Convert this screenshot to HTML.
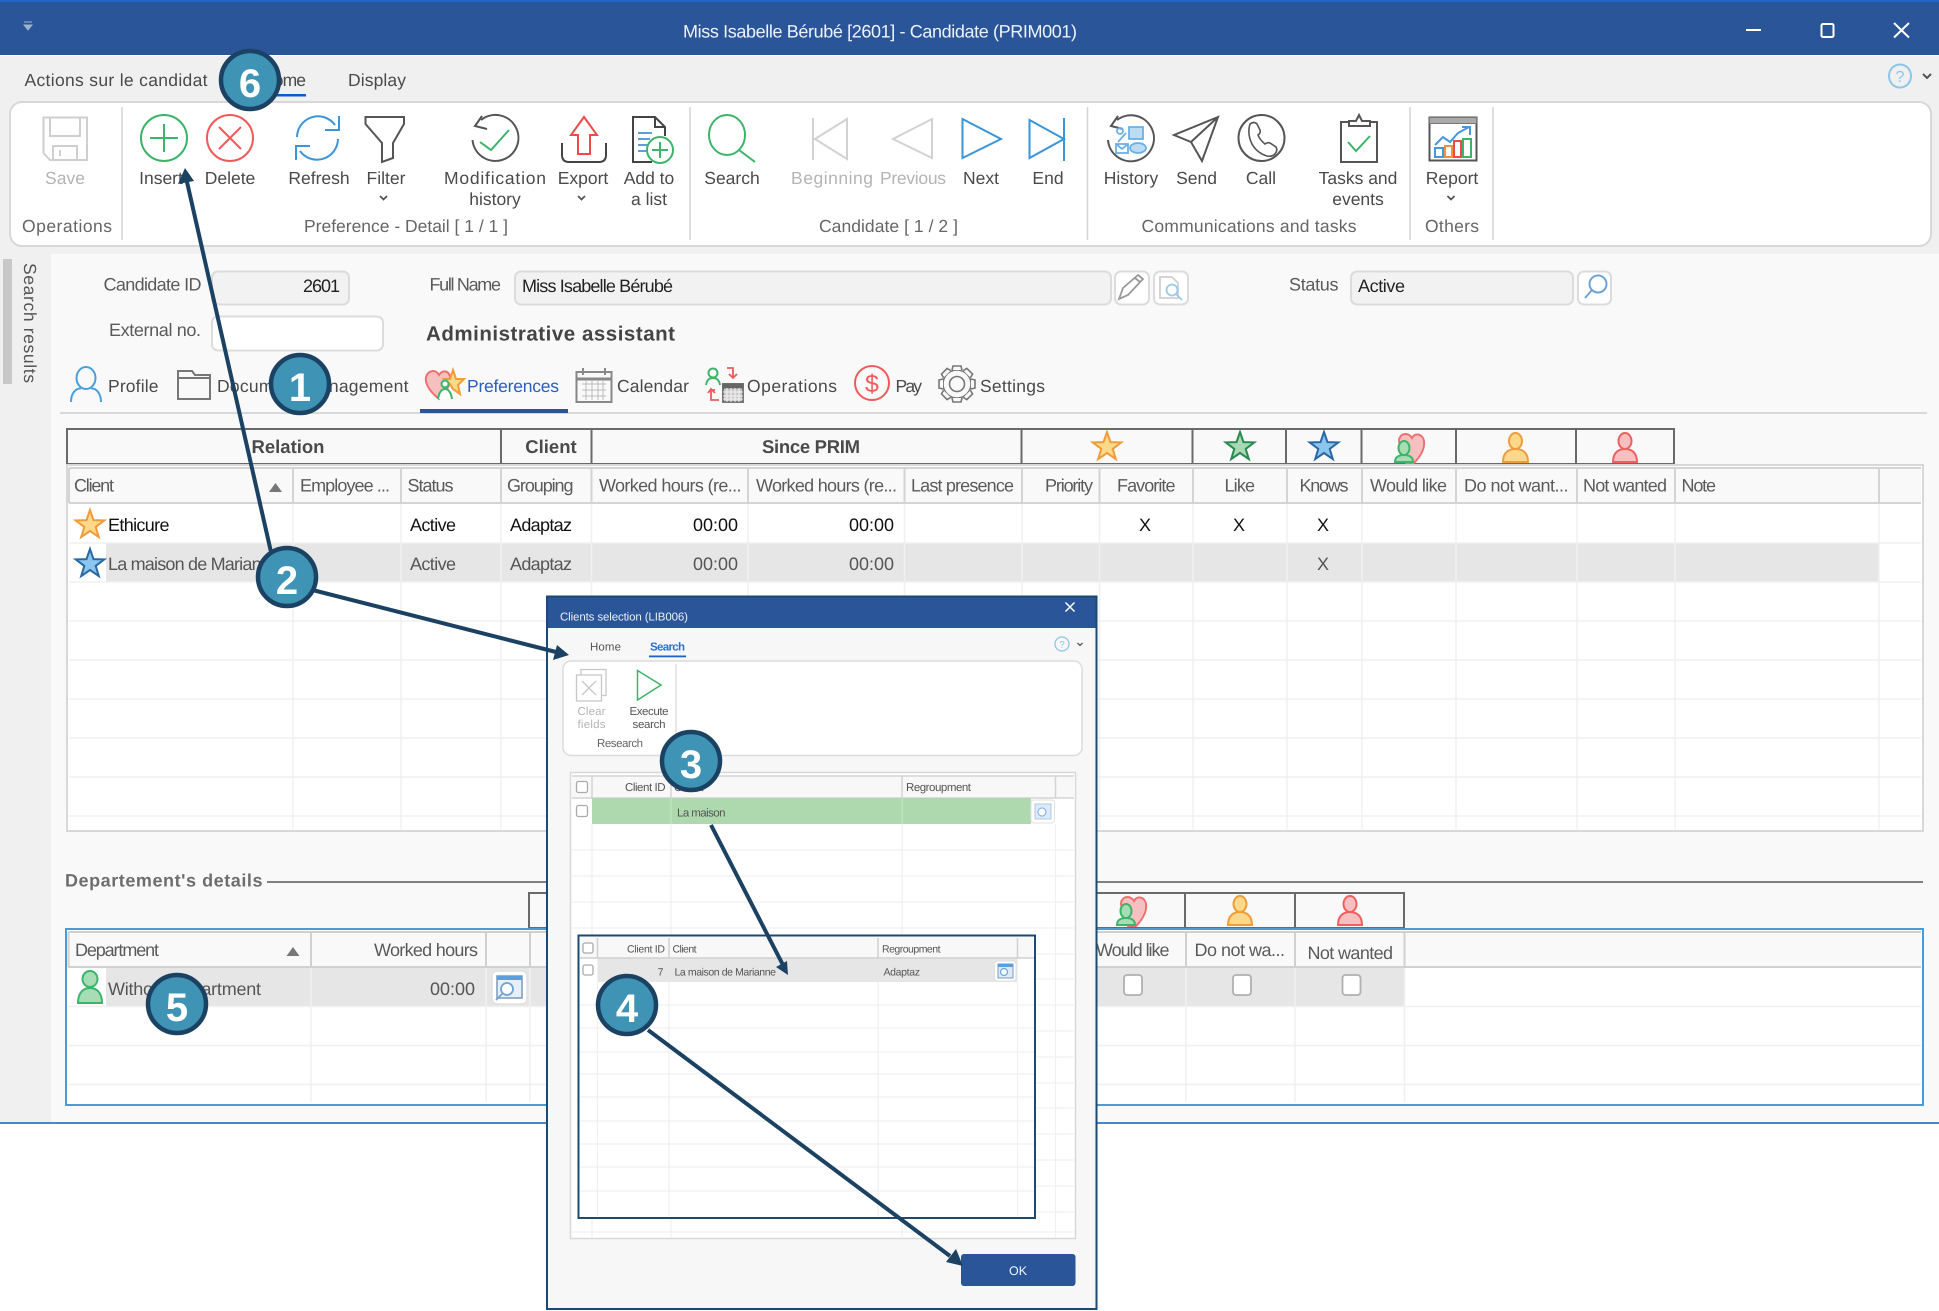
<!DOCTYPE html>
<html lang="en"><head><meta charset="utf-8"><title>Candidate</title>
<style>
html,body{margin:0;padding:0;background:#fff}
svg{display:block;filter:blur(.3px)}
text{font-family:"Liberation Sans",sans-serif;text-rendering:geometricPrecision;white-space:pre}
.r{font-size:17.5px;fill:#4a4a4a;text-anchor:middle}
.d{fill:#b4b4b4}
.g{font-size:17.5px;fill:#666;text-anchor:middle}
.t{font-size:17.5px;fill:#4a4a4a}
.f{font-size:18px;fill:#5a5a5a}
.v{font-size:18px;fill:#222}
.h{font-size:18px;fill:#5a5a5a}
.c{font-size:18px;fill:#111}
.s{font-size:18px;fill:#555}
.b{font-size:18.5px;font-weight:bold;fill:#4a4a4a;text-anchor:middle}
.m{font-size:11.5px;fill:#555}
.n{font-family:"Liberation Sans",sans-serif;font-size:40px;font-weight:bold;fill:#fff;text-anchor:middle}
</style></head><body>
<svg xmlns="http://www.w3.org/2000/svg" width="1939" height="1311" viewBox="0 0 1939 1311">
<rect width="1939" height="1311" fill="#fff"/>
<!-- window -->
<rect x="0" y="56" width="1939" height="1066" fill="#f0f0f0"/>
<rect x="0" y="0" width="1939" height="55" fill="#2a5599"/>
<rect x="0" y="0" width="1939" height="2" fill="#1f66c8"/>
<rect x="0" y="1122" width="1939" height="2" fill="#4a86c8"/>
<path d="M24 22h8M24 25h8l-4 5z" fill="#9fb3cf" stroke="#9fb3cf"/>
<text x="683" y="37.5" font-size="18" fill="#eef3fa" textLength="394">Miss Isabelle Bérubé [2601] - Candidate (PRIM001)</text>
<path d="M1746 30h15" stroke="#fff" stroke-width="2"/>
<rect x="1821.5" y="24" width="12" height="13" rx="1.5" fill="none" stroke="#fff" stroke-width="2"/>
<path d="M1894 23l15 14.500M1909 23l-15 14.500" stroke="#fff" stroke-width="2"/>
<!-- tabs -->
<text class="t" x="24.5" y="86" textLength="183">Actions sur le candidat</text>
<text class="t" x="262" y="86" textLength="44">Home</text>
<rect x="262" y="94" width="44" height="2.5" fill="#0a5ad1"/>
<text class="t" x="348" y="86" textLength="58">Display</text>
<ellipse cx="1900" cy="76" rx="11" ry="11.5" fill="none" stroke="#8cc6ea" stroke-width="2"/>
<text x="1900" y="82" font-size="16" fill="#8cc6ea" text-anchor="middle">?</text>
<path d="M1923 74l4 4 4-4" fill="none" stroke="#555" stroke-width="2"/>
<!-- ribbon -->
<rect x="10" y="102" width="1921" height="144" rx="12" fill="#fff" stroke="#d8d8d8" stroke-width="2"/>
<path d="M122 107V240M690 107V240M1087.5 107V240M1410 107V240M1493 107V240" stroke="#d4d4d4" stroke-width="1.5"/>
<!-- ribbon icons -->
<g fill="none" stroke-width="2">
<g stroke="#cfcfcf"><path d="M43.5 117.5H87V160H50L43.5 153Z"/><path d="M50 117.5V136H80V117.5M53 160V146H77V160M60 150V156"/></g>
<g stroke="#3cb46a"><circle cx="164" cy="138" r="23"/><path d="M164 124V152M150 138H178"/></g>
<g stroke="#ef5b5b"><circle cx="230" cy="138" r="23"/><path d="M219 127L241 149M241 127L219 149"/></g>
<g stroke="#3a96d8"><path d="M297 137A21 21 0 0 1 335 125"/><path d="M339 116V130H325"/><path d="M338 139A21 21 0 0 1 300 151"/><path d="M296 160V146H310"/></g>
<path d="M365.5 117H404V124L393 143V158L382 162V143L365.5 124Z" stroke="#555"/>
<g stroke="#555"><path d="M481 120A23 23 0 1 1 472.5 140"/><path d="M482 116L475 126L487 129"/></g>
<path d="M480 142L491 150L509 130" stroke="#3cb46a"/>
<path d="M584 117L597 135H590V154H578V135H571Z" stroke="#ef4a4a"/>
<path d="M562 143V155Q562 162 569 162H599Q606 162 606 155V143" stroke="#444"/>
<path d="M652 162H633V117H655L665 127V136M655 117V127H665" stroke="#444"/>
<path d="M638 133h14M638 139h12M638 145h10M638 151h10" stroke="#5aa0dc"/>
<circle cx="660" cy="150" r="13" fill="#fff" stroke="#3cb46a"/>
<path d="M660 142V158M652 150H668" stroke="#3cb46a"/>
<g stroke="#3cb46a"><ellipse cx="727" cy="135" rx="18" ry="20"/><path d="M739 150L755 162"/></g>
<g stroke="#d2d2d2"><path d="M813 118V160"/><path d="M847 119L815 139L847 159Z"/><path d="M932 119L893 139L932 158Z"/></g>
<g stroke="#3a96d8"><path d="M962.5 119L1001 139L962.5 158Z"/><path d="M1029.5 120L1064 139L1029.5 158Z"/><path d="M1064 118V161"/></g>
<g stroke="#555"><path d="M1117 120A23 23 0 1 1 1108 140"/><path d="M1118 116L1111 126L1123 129"/></g>
<g stroke="#6cb0e4" stroke-width="1.8"><rect x="1129" y="127" width="14" height="12" fill="#bcdcf4"/><circle cx="1120" cy="131" r="3"/><path d="M1118 142L1126 133"/><rect x="1116" y="144" width="12" height="9"/><path d="M1116 144l6 5 6-5"/><ellipse cx="1138" cy="148" rx="8" ry="5" fill="#bcdcf4"/></g>
<path d="M1218 117L1174 135L1191 142L1202 161ZM1218 117L1191 142" stroke="#555"/>
<circle cx="1261.5" cy="138" r="23" stroke="#555"/>
<path d="M1250 125q4-3 7 0l3 6q1 3-2 5q2 5 7 9q3-2 5-1l6 4q2 3-1 7q-3 3-8 2q-10-3-15-12q-5-10-2-20z" stroke="#555" stroke-width="1.600" transform="translate(0 -1)"/>
<path d="M1349 122H1341V162H1377V122H1370M1349 126V121H1356L1359 115L1362 121H1370V126Z" stroke="#555"/>
<path d="M1348 142L1356 151L1370 136" stroke="#3cb46a"/>
<rect x="1429.5" y="117.5" width="47" height="43" stroke="#555"/>
<rect x="1429.5" y="117.5" width="47" height="6" fill="#aaa" stroke="#777" stroke-width="1"/>
<rect x="1435" y="148" width="8" height="9" stroke="#4a96d8"/><rect x="1445" y="146" width="7" height="11" stroke="#f09040"/><rect x="1454" y="141" width="7" height="16" stroke="#ef4a4a"/><rect x="1463" y="139" width="8" height="18" stroke="#3cb46a"/>
<path d="M1435 145L1443 137L1450 142L1458 133L1469 127M1462 127H1470V135" stroke="#4a96d8"/>
</g>
<!-- ribbon labels -->
<text class="r d" x="65" y="184">Save</text>
<text class="r" x="161" y="184">Insert</text>
<text class="r" x="230" y="184">Delete</text>
<text class="r" x="319" y="184">Refresh</text>
<text class="r" x="386" y="184">Filter</text>
<text class="r" x="495" y="184" textLength="102">Modification</text>
<text class="r" x="495" y="205">history</text>
<text class="r" x="583" y="184">Export</text>
<text class="r" x="649" y="184">Add to</text>
<text class="r" x="649" y="205">a list</text>
<text class="r" x="732" y="184">Search</text>
<text class="r d" x="832" y="184" textLength="82">Beginning</text>
<text class="r d" x="913" y="184" textLength="66">Previous</text>
<text class="r" x="981" y="184">Next</text>
<text class="r" x="1048" y="184">End</text>
<text class="r" x="1131" y="184">History</text>
<text class="r" x="1196.5" y="184">Send</text>
<text class="r" x="1261" y="184">Call</text>
<text class="r" x="1358" y="184">Tasks and</text>
<text class="r" x="1358" y="205">events</text>
<text class="r" x="1452" y="184">Report</text>
<g fill="none" stroke="#555" stroke-width="1.8"><path d="M380 196l3.500 3.500 3.500-3.500M578 196l3.500 3.500 3.500-3.500M1447.500 196l3.500 3.500 3.500-3.500"/></g>
<text class="g" x="67" y="232" textLength="90">Operations</text>
<text class="g" x="406" y="232" textLength="204">Preference - Detail [ 1 / 1 ]</text>
<text class="g" x="888.500" y="232" textLength="139">Candidate [ 1 / 2 ]</text>
<text class="g" x="1249" y="232" textLength="215">Communications and tasks</text>
<text class="g" x="1452" y="232" textLength="54">Others</text>
<!-- content -->
<rect x="51" y="254" width="1888" height="868" fill="#f9f9f9"/>
<rect x="3" y="259" width="9" height="125" fill="#c8c8c8"/>
<text transform="translate(24 263) rotate(90)" font-size="17.500" fill="#555" textLength="120">Search results</text>
<!-- form -->
<text class="f" x="103.500" y="290.500" textLength="98">Candidate ID</text>
<rect x="212" y="271.500" width="137" height="33" rx="6" fill="#f2f2f2" stroke="#dcdcdc" stroke-width="2"/>
<text class="v" x="340" y="292" text-anchor="end" textLength="37">2601</text>
<text class="f" x="109" y="336" textLength="92">External no.</text>
<rect x="212" y="316.500" width="171" height="34" rx="6" fill="#fff" stroke="#dcdcdc" stroke-width="2"/>
<text class="f" x="429.500" y="290.500" textLength="71.500">Full Name</text>
<rect x="515" y="271.500" width="596" height="33" rx="6" fill="#f2f2f2" stroke="#dcdcdc" stroke-width="2"/>
<text class="v" x="522" y="292" textLength="151">Miss Isabelle Bérubé</text>
<rect x="1115" y="271.500" width="34" height="33" rx="6" fill="#fff" stroke="#dcdcdc" stroke-width="2"/>
<path d="M1119 299L1123 288L1138 275L1143 279L1128 295ZM1135 278L1140 282" fill="none" stroke="#999" stroke-width="1.800"/>
<rect x="1154" y="271.500" width="34" height="33" rx="6" fill="#fff" stroke="#dcdcdc" stroke-width="2"/>
<path d="M1160 277H1172L1178 283V298H1160Z" fill="none" stroke="#d0d0d0" stroke-width="1.800"/>
<circle cx="1172" cy="290" r="5.500" fill="none" stroke="#9cc8ea" stroke-width="1.800"/><path d="M1176 294L1182 300" stroke="#9cc8ea" stroke-width="1.800"/>
<text class="f" x="1289" y="290.500" textLength="49.500">Status</text>
<rect x="1351" y="271.500" width="222" height="33" rx="6" fill="#f2f2f2" stroke="#dcdcdc" stroke-width="2"/>
<text class="v" x="1358" y="292" textLength="47">Active</text>
<rect x="1578" y="271.500" width="33" height="33" rx="6" fill="#fff" stroke="#dcdcdc" stroke-width="2"/>
<circle cx="1598" cy="284" r="8.500" fill="none" stroke="#6ea4d4" stroke-width="2"/><path d="M1592 290L1585 298" stroke="#6ea4d4" stroke-width="2"/>
<text x="426" y="340.500" font-size="20.500" font-weight="bold" fill="#444" textLength="249">Administrative assistant</text>
<!-- page tabs -->
<rect x="60" y="412" width="1867" height="2" fill="#d8d8d8"/>
<rect x="420" y="409" width="148" height="4" fill="#2a5599"/>
<g fill="none" stroke-width="2">
<g stroke="#4aa0dc"><ellipse cx="86" cy="378" rx="9.500" ry="11"/><path d="M71 402C71 393 76 388 81 388.500M101 402C101 393 96 388 91 388.500"/></g>
<path d="M178 399V371H192L195 375H210V399ZM178 378H211" stroke="#777"/>
<path d="M439 399C428 390 425 383 426 377C428 370 436 369 439 375C443 369 449 371 450 377C451 383 448 390 439 399Z" fill="#f6c0c0" stroke="#ef7070"/>
<path d="M453 370L456 379H464L458 385L460 394L453 389L450 384L444 379H450Z" fill="#fbd98a" stroke="#f09c3c"/>
<circle cx="445" cy="384" r="3.500" fill="#fff" stroke="#3cb46a"/><path d="M438 399C439 392 442 389 445 389C448 389 451 392 452 399" stroke="#3cb46a" fill="#fff"/>
<g stroke="#888"><rect x="576.500" y="372" width="35" height="30" /><path d="M576.500 379H611.500" stroke-width="3"/><path d="M583 368V375M605 368V375"/></g>
<path d="M582 384H606M582 390H606M582 396H606M586 380V400M592 380V400M598 380V400M603 380V400" stroke="#bbb" stroke-width="1"/>
<circle cx="713" cy="373" r="4.500" stroke="#3cb46a"/><path d="M706 385C707 379 710 378 713 378C716 378 719 379 720 385" stroke="#3cb46a"/>
<path d="M727 368H733V377M729 374L733 378L737 374M715 390H711V400H719M708 393L711 389L715 393" stroke="#ef5b5b" stroke-width="1.800"/>
<rect x="723" y="384" width="20" height="18" fill="#c8c8c8" stroke="#777"/><rect x="723" y="384" width="20" height="4" fill="#666" stroke="#666" stroke-width="1"/>
<path d="M727 388V402M731 388V402M735 388V402M739 388V402M723 392H743M723 396H743M723 399H743" stroke="#f4f4f4" stroke-width="1"/>
<circle cx="872" cy="383" r="17" stroke="#ef5b5b"/>
<circle cx="957" cy="384" r="14" stroke="#777" stroke-width="1.600"/><circle cx="957" cy="384" r="7.500" stroke="#777" stroke-width="1.600"/>
</g>
<text x="872" y="392" font-size="25" fill="#ef5b5b" text-anchor="middle">$</text>
<g fill="#f9f9f9" stroke="#777" stroke-width="1.600" transform="translate(957 384)">
<path d="M-5-14L-4-18H4L5-14"/><path d="M-5-14L-4-18H4L5-14" transform="rotate(45)"/><path d="M-5-14L-4-18H4L5-14" transform="rotate(90)"/><path d="M-5-14L-4-18H4L5-14" transform="rotate(135)"/><path d="M-5-14L-4-18H4L5-14" transform="rotate(180)"/><path d="M-5-14L-4-18H4L5-14" transform="rotate(225)"/><path d="M-5-14L-4-18H4L5-14" transform="rotate(270)"/><path d="M-5-14L-4-18H4L5-14" transform="rotate(315)"/></g>
<text class="t" x="108" y="392" textLength="50.500">Profile</text>
<text class="t" x="217" y="392" textLength="191.500">Document management</text>
<text class="t" x="467" y="392" textLength="92" style="fill:#2a5fbb">Preferences</text>
<text class="t" x="617" y="392" textLength="72">Calendar</text>
<text class="t" x="747" y="392" textLength="90">Operations</text>
<text class="t" x="895.500" y="392" textLength="26.500">Pay</text>
<text class="t" x="980" y="392" textLength="65">Settings</text>
<!-- main group header -->
<rect x="67" y="429" width="1607" height="35" fill="#f9f9f9" stroke="#6a6a6a" stroke-width="2"/>
<path d="M501 429V464M591.500 429V464M1021.500 429V464M1192.500 429V464M1286 429V464M1361.500 429V464M1456 429V464M1576 429V464" stroke="#6a6a6a" stroke-width="2"/>
<text class="b" x="288" y="453">Relation</text>
<text class="b" x="551" y="453">Client</text>
<text class="b" x="811" y="453" textLength="98">Since PRIM</text>
<polygon transform="translate(1107 447)" points="0,-15 3.500,-4.900 14.300,-4.600 5.700,1.900 8.800,12.100 0,6 -8.800,12.100 -5.700,1.900 -14.300,-4.600 -3.500,-4.900" fill="#fbd98a" stroke="#f09c3c" stroke-width="2"/>
<polygon transform="translate(1240 447)" points="0,-15 3.500,-4.900 14.300,-4.600 5.700,1.900 8.800,12.100 0,6 -8.800,12.100 -5.700,1.900 -14.300,-4.600 -3.500,-4.900" fill="#a8d8b4" stroke="#2a8a50" stroke-width="2"/>
<polygon transform="translate(1324 447)" points="0,-15 3.500,-4.900 14.300,-4.600 5.700,1.900 8.800,12.100 0,6 -8.800,12.100 -5.700,1.900 -14.300,-4.600 -3.500,-4.900" fill="#8cc6ee" stroke="#2a68a4" stroke-width="2"/>
<g stroke-width="2">
<path d="M1414 463C1421 456 1425 448 1424 441C1423 434 1415 432 1412 438C1408 432 1400 433 1399 440C1399 444 1400 446 1402 448L1406 463Z" fill="#f6c0c0" stroke="#ef7070"/>
<ellipse cx="1404" cy="448" rx="5.500" ry="7" fill="#a8dcb4" stroke="#3cb46a"/><path d="M1395 462C1395 457 1399 455 1404 455C1409 455 1413 457 1413 462Z" fill="#a8dcb4" stroke="#3cb46a"/>
<ellipse cx="1515.500" cy="441" rx="6.500" ry="8" fill="#fbd98a" stroke="#f09c3c"/><path d="M1503 462C1503 453 1508 449 1515.500 449C1523 449 1528 453 1528 462Z" fill="#fbd98a" stroke="#f09c3c"/>
<ellipse cx="1625" cy="441" rx="6.500" ry="8" fill="#f6c0c0" stroke="#ef6060"/><path d="M1613 462C1613 453 1618 449 1625 449C1632 449 1637 453 1637 462Z" fill="#f6c0c0" stroke="#ef6060"/>
</g>
<!-- main grid -->
<rect x="67" y="465" width="1856" height="366" fill="#fff" stroke="#d8d8d8" stroke-width="2"/>
<rect x="69" y="468" width="1852" height="35" fill="#f9f9f9"/>
<rect x="106" y="543" width="1773" height="39" fill="#e6e6e6"/>
<path d="M69 543H1921M69 582H1921M69 621H1921M69 660H1921M69 699H1921M69 738H1921M69 777H1921M69 816H1921M293 503V829M401 503V829M501 503V829M591.500 503V829M748 503V829M904.500 503V829M1022 503V829M1099.500 503V829M1193 503V829M1287 503V829M1362 503V829M1456 503V829M1577 503V829M1675 503V829M1879 503V829" stroke="#f0f0f0" stroke-width="1.500"/>
<path d="M69 468H1921M69 503H1921M69 468V503M293 468V503M401 468V503M501 468V503M591.500 468V503M748 468V503M904.500 468V503M1022 468V503M1099.500 468V503M1193 468V503M1287 468V503M1362 468V503M1456 468V503M1577 468V503M1675 468V503M1879 468V503" stroke="#d4d4d4" stroke-width="2"/>
<text class="h" x="74" y="491.500" textLength="40">Client</text>
<path d="M269 492L275.500 483L282 492Z" fill="#777"/>
<text class="h" x="300" y="491.500" textLength="90">Employee ...</text>
<text class="h" x="407.500" y="491.500" textLength="46">Status</text>
<text class="h" x="507" y="491.500" textLength="66.500">Grouping</text>
<text class="h" x="599" y="491.500" textLength="142.500">Worked hours (re...</text>
<text class="h" x="756" y="491.500" textLength="141">Worked hours (re...</text>
<text class="h" x="911" y="491.500" textLength="103">Last presence</text>
<text class="h" x="1045" y="491.500" textLength="48">Priority</text>
<text class="h" x="1117" y="491.500" textLength="58.500">Favorite</text>
<text class="h" x="1224.500" y="491.500" textLength="30.500">Like</text>
<text class="h" x="1299.500" y="491.500" textLength="49">Knows</text>
<text class="h" x="1370" y="491.500" textLength="77">Would like</text>
<text class="h" x="1464" y="491.500" textLength="104.500">Do not want...</text>
<text class="h" x="1583" y="491.500" textLength="84">Not wanted</text>
<text class="h" x="1681.500" y="491.500" textLength="34.500">Note</text>
<polygon transform="translate(90 525)" points="0,-15 3.500,-4.900 14.300,-4.600 5.700,1.900 8.800,12.100 0,6 -8.800,12.100 -5.700,1.900 -14.300,-4.600 -3.500,-4.900" fill="#fbd98a" stroke="#f09c3c" stroke-width="2"/>
<polygon transform="translate(90 564)" points="0,-15 3.500,-4.900 14.300,-4.600 5.700,1.900 8.800,12.100 0,6 -8.800,12.100 -5.700,1.900 -14.300,-4.600 -3.500,-4.900" fill="#8cc6ee" stroke="#2a68a4" stroke-width="2"/>
<text class="c" x="108" y="531" textLength="61.500">Ethicure</text>
<text class="c" x="410" y="531" textLength="46">Active</text>
<text class="c" x="510" y="531" textLength="62">Adaptaz</text>
<text class="c" x="738" y="531" text-anchor="end">00:00</text>
<text class="c" x="894" y="531" text-anchor="end">00:00</text>
<text class="c" x="1145" y="531" text-anchor="middle">X</text>
<text class="c" x="1239" y="531" text-anchor="middle">X</text>
<text class="c" x="1323" y="531" text-anchor="middle">X</text>
<text class="s" x="108" y="570" textLength="172">La maison de Marianne</text>
<text class="s" x="410" y="570" textLength="46">Active</text>
<text class="s" x="510" y="570" textLength="62">Adaptaz</text>
<text class="s" x="738" y="570" text-anchor="end">00:00</text>
<text class="s" x="894" y="570" text-anchor="end">00:00</text>
<text class="s" x="1323" y="570" text-anchor="middle">X</text>
<!-- department -->
<text x="65" y="886.500" font-size="18" font-weight="bold" fill="#6e6e6e" textLength="197.500">Departement's details</text>
<rect x="267" y="881" width="1656" height="2" fill="#808080"/>
<rect x="529" y="893" width="875" height="35" fill="#f9f9f9" stroke="#6a6a6a" stroke-width="2"/>
<path d="M1185 893V928M1295 893V928" stroke="#6a6a6a" stroke-width="2"/>
<g stroke-width="2">
<path d="M1136 926C1143 919 1147 911 1146 904C1145 897 1137 895 1134 901C1130 895 1122 896 1121 903C1121 907 1122 909 1124 911L1128 926Z" fill="#f6c0c0" stroke="#ef7070"/>
<ellipse cx="1126" cy="911" rx="5.500" ry="7" fill="#a8dcb4" stroke="#3cb46a"/><path d="M1117 925C1117 920 1121 918 1126 918C1131 918 1135 920 1135 925Z" fill="#a8dcb4" stroke="#3cb46a"/>
<ellipse cx="1240" cy="904" rx="6.500" ry="8" fill="#fbd98a" stroke="#f09c3c"/><path d="M1228 925C1228 916 1233 912 1240 912C1247 912 1252 916 1252 925Z" fill="#fbd98a" stroke="#f09c3c"/>
<ellipse cx="1350" cy="904" rx="6.500" ry="8" fill="#f6c0c0" stroke="#ef6060"/><path d="M1338 925C1338 916 1343 912 1350 912C1357 912 1362 916 1362 925Z" fill="#f6c0c0" stroke="#ef6060"/>
</g>
<rect x="66" y="929" width="1857" height="176" fill="#fff" stroke="#4a9ad8" stroke-width="2"/>
<rect x="68" y="932" width="1853" height="35" fill="#f9f9f9"/>
<rect x="106" y="967" width="1298" height="39" fill="#e6e6e6"/>
<path d="M68 1045.500H1921M68 1084.500H1921M68 1006.500H1921M311 967V1102M486 967V1102M530 967V1102M1186 967V1102M1295 967V1102M1404.500 967V1102" stroke="#f0f0f0" stroke-width="1.500"/>
<path d="M68 932H1921M68 967H1921M68.500 932V967M311 932V967M486 932V967M530 932V967M1186 932V967M1295 932V967M1404.500 932V967" stroke="#d0d0d0" stroke-width="2"/>
<text class="h" x="75" y="956" textLength="84">Department</text>
<path d="M286.500 956L293 947L299.500 956Z" fill="#777"/>
<text class="h" x="374" y="956" textLength="104">Worked hours</text>
<text class="h" x="1096" y="956" textLength="73.500">Would like</text>
<text class="h" x="1194.500" y="956" textLength="90.500">Do not wa...</text>
<text class="h" x="1307.500" y="959" textLength="85.500">Not wanted</text>
<ellipse cx="90" cy="979" rx="7.500" ry="8" fill="#a8dcb4" stroke="#3cb46a" stroke-width="2"/><path d="M78 1003C78 993 83 988 90 988C97 988 102 993 102 1003Z" fill="#a8dcb4" stroke="#3cb46a" stroke-width="2"/>
<text class="s" x="108" y="995" textLength="153">Without department</text>
<text class="s" x="475" y="995" text-anchor="end">00:00</text>
<rect x="492" y="971" width="35" height="33" rx="5" fill="#fff" stroke="#e0e0e0" stroke-width="1.500"/>
<path d="M497 976H522V998H497Z" fill="#e6f0fa" stroke="#7a9ab8" stroke-width="1.500"/><rect x="497" y="976" width="25" height="4" fill="#5aa0dc"/><circle cx="507" cy="989" r="6" fill="#fff" stroke="#6ea4d4" stroke-width="1.800"/><path d="M502 994L496 1000" stroke="#6ea4d4" stroke-width="1.800"/>
<g fill="#fff" stroke="#b0b0b0" stroke-width="1.800"><rect x="1124" y="975" width="18" height="20" rx="3"/><rect x="1233" y="975" width="18" height="20" rx="3"/><rect x="1342.500" y="975" width="18" height="20" rx="3"/></g>
<!-- dialog -->
<rect x="547" y="596.500" width="549.500" height="712.500" fill="#f7f7f7" stroke="#1b4a72" stroke-width="2"/>
<rect x="548" y="597.500" width="547.500" height="30.500" fill="#2a5599"/>
<text x="560" y="620.500" font-size="11.500" fill="#e8eef8" textLength="128">Clients selection (LIB006)</text>
<path d="M1065.500 602.500l9 9M1074.500 602.500l-9 9" stroke="#fff" stroke-width="1.500"/>
<text class="m" x="590" y="650.500" textLength="31">Home</text>
<text class="m" x="650" y="650.500" textLength="35" font-weight="bold" style="fill:#2a70d0">Search</text>
<rect x="649" y="655.500" width="37" height="1.800" fill="#1a62c8"/>
<circle cx="1062" cy="644" r="7" fill="none" stroke="#8cc6ea" stroke-width="1.300"/>
<text x="1062" y="648" font-size="10" fill="#8cc6ea" text-anchor="middle">?</text>
<path d="M1077.500 643l2.500 2.500 2.500-2.500" fill="none" stroke="#555" stroke-width="1.300"/>
<rect x="563" y="661" width="519" height="94.500" rx="8" fill="#fff" stroke="#dcdcdc" stroke-width="1.500"/>
<path d="M676 664V750" stroke="#d4d4d4" stroke-width="1.200"/>
<g fill="none" stroke="#c8c8c8" stroke-width="1.300"><rect x="581" y="669.500" width="25" height="26"/><rect x="576.500" y="675" width="25" height="26" fill="#fff"/><path d="M582 681L596 695M596 681L582 695"/></g>
<path d="M637.500 670.500L661 685L637.500 700Z" fill="none" stroke="#3cb46a" stroke-width="1.500"/>
<text class="m" x="591.500" y="715" text-anchor="middle" style="fill:#b4b4b4" textLength="28">Clear</text>
<text class="m" x="591.500" y="728" text-anchor="middle" style="fill:#b4b4b4" textLength="28">fields</text>
<text class="m" x="649" y="715" text-anchor="middle" textLength="39">Execute</text>
<text class="m" x="649" y="728" text-anchor="middle" textLength="33">search</text>
<text class="m" x="620" y="747" text-anchor="middle" style="fill:#666" textLength="46">Research</text>
<!-- dialog grid -->
<rect x="570.500" y="772.500" width="505" height="466" fill="#fff" stroke="#d8d8d8" stroke-width="1.500"/>
<rect x="572" y="776" width="502" height="22" fill="#f8f8f8"/>
<path d="M572 850H1074M572 876H1074M572 902H1074M572 928H1074M1036 954H1074M1036 979H1074M1036 1005H1074M1036 1031H1074M1036 1057H1074M1036 1083H1074M1036 1108H1074M1036 1134H1074M1036 1160H1074M1036 1186H1074M1036 1212H1074M572 1232H1074M592 824V1237M671 824V1237M902 824V1237M1055.500 824V1237" stroke="#f0f0f0" stroke-width="1.200"/>
<path d="M572 776H1074M572 798H1074M592 776V798M671 776V798M902 776V798M1055.500 776V798" stroke="#d4d4d4" stroke-width="1.500"/>
<rect x="592" y="798" width="439" height="26" fill="#aed8ae"/>
<path d="M671 798V824M902 798V824" stroke="#c4e4c4" stroke-width="1.200"/>
<rect x="1031" y="800" width="23.500" height="23" rx="3" fill="#fff" stroke="#e0e0e0"/>
<rect x="1035" y="804" width="16" height="15" fill="#dceafa" stroke="#b0c8e0"/><circle cx="1042" cy="812" r="4" fill="#fff" stroke="#8cb8e0" stroke-width="1.200"/>
<g fill="#fff" stroke="#aaa" stroke-width="1.300"><rect x="576.500" y="781.500" width="11" height="11" rx="2"/><rect x="576.500" y="805.500" width="11" height="11" rx="2"/></g>
<text class="m" x="625" y="791" textLength="40.500">Client ID</text>
<text class="m" x="674" y="791">Client</text>
<text class="m" x="906" y="791" textLength="65">Regroupment</text>
<text class="m" x="677" y="816.500" textLength="48.500">La maison</text>
<!-- inner box -->
<rect x="578.500" y="935.500" width="456.500" height="282.500" fill="#fff" stroke="#1b4a72" stroke-width="2"/>
<rect x="580" y="937" width="453" height="21" fill="#f8f8f8"/>
<rect x="597.500" y="958" width="420" height="24" fill="#e6e6e6"/>
<path d="M580 1005H1034M580 1028H1034M580 1052H1034M580 1074H1034M580 1097H1034M580 1121H1034M580 1144H1034M580 1167H1034M580 1191H1034M597.500 982V1216M669 982V1216M878 982V1216M1017.500 982V1216" stroke="#f0f0f0" stroke-width="1.200"/>
<path d="M580 958H1034M597.500 938V958M669 938V958M878 938V958M1017.500 938V958" stroke="#d0d0d0" stroke-width="1.500"/>
<g fill="#fff" stroke="#aaa" stroke-width="1.300"><rect x="583" y="943" width="10" height="10" rx="2"/><rect x="583" y="965" width="10" height="10" rx="2"/></g>
<text x="627" y="952.500" font-size="10.500" fill="#555" textLength="38">Client ID</text>
<text x="672.500" y="952.500" font-size="10.500" fill="#555" textLength="24">Client</text>
<text x="882" y="952.500" font-size="10.500" fill="#555" textLength="58.500">Regroupment</text>
<text x="663.500" y="975.500" font-size="10.500" fill="#555" text-anchor="end">7</text>
<text x="674.500" y="975.500" font-size="10.500" fill="#555" textLength="101.500">La maison de Marianne</text>
<text x="883.500" y="975.500" font-size="10.500" fill="#555" textLength="36.500">Adaptaz</text>
<rect x="994.500" y="961" width="21.500" height="20" rx="3" fill="#fff" stroke="#e0e0e0"/>
<rect x="998" y="964" width="15" height="14" fill="#dceafa" stroke="#7a9ab8"/><rect x="998" y="964" width="15" height="3" fill="#5aa0dc"/><circle cx="1004" cy="972" r="3.500" fill="#fff" stroke="#6ea4d4" stroke-width="1.200"/>
<!-- ok -->
<rect x="961" y="1254" width="114.500" height="32" rx="3" fill="#2a5599"/>
<text x="1018" y="1275" font-size="12.500" fill="#f0f4fa" text-anchor="middle">OK</text>
<!-- arrows -->
<g stroke="#1b4263" stroke-width="4" fill="none">
<path d="M271 552L187 182"/>
<path d="M312.500 590L556 652"/>
<path d="M711 825L783 965"/>
<path d="M648 1030L950 1256"/>
</g>
<g fill="#1b4263">
<path d="M185 168L178 184L194 181Z"/>
<path d="M569 655L553 660L557 645Z"/>
<path d="M788 975L776 967L787 961Z"/>
<path d="M963 1266L946 1262L956 1249Z"/>
</g>
<!-- badges -->
<g fill="#3f93b5" stroke="#1b4263" stroke-width="4.500">
<circle cx="250" cy="80" r="29"/><circle cx="300" cy="384" r="29"/><circle cx="287" cy="577" r="29"/><circle cx="691" cy="761" r="29"/><circle cx="627" cy="1005" r="29"/><circle cx="177" cy="1004" r="29"/>
</g>
<text class="n" x="250" y="97">6</text>
<text class="n" x="300" y="401">1</text>
<text class="n" x="287" y="594">2</text>
<text class="n" x="691" y="778">3</text>
<text class="n" x="627" y="1022">4</text>
<text class="n" x="177" y="1021">5</text>
</svg>
</body></html>
